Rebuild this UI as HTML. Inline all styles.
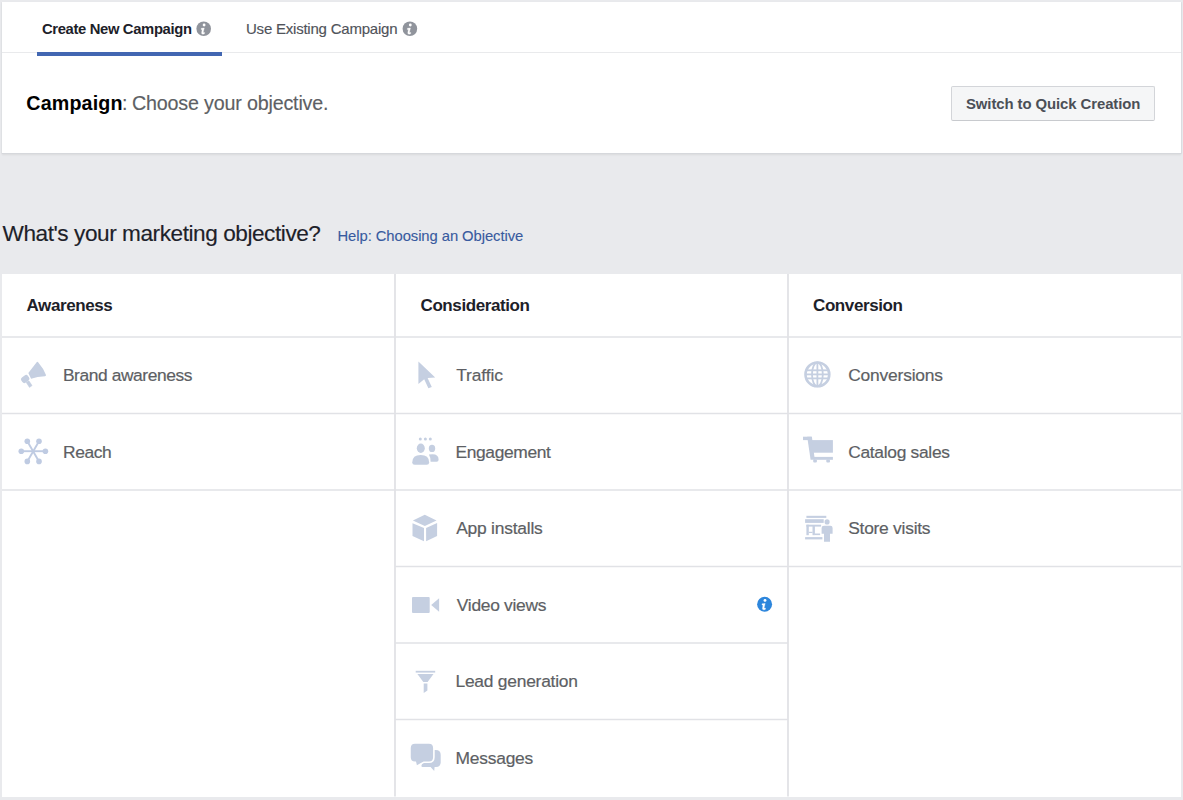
<!DOCTYPE html>
<html><head><meta charset="utf-8">
<style>
html,body{margin:0;padding:0;}
body{width:1183px;height:800px;background:#e9eaed;position:relative;overflow:hidden;font-family:"Liberation Sans",sans-serif;}
.a{position:absolute;white-space:nowrap;line-height:1;}
.card{position:absolute;left:2px;top:2px;width:1179px;height:151px;background:#fff;border-bottom:1px solid #d6d8dc;box-shadow:0 1px 2px rgba(0,0,0,0.07), 1px 0 0 #e0e1e5, -0.5px 0 0 #e0e1e5;}
.hl{position:absolute;height:1px;background:#dddfe2;}
.vl{position:absolute;width:2px;background:#e3e4e8;}
.item{font-size:17.4px;color:#5d5f64;-webkit-text-stroke:0.2px #5d5f64;}
.hd{font-size:17px;font-weight:700;letter-spacing:-0.4px;color:#1d2129;}
svg.ic{position:absolute;overflow:visible;}
.icf{fill:#c5cfe1;}
</style></head>
<body>
<div class="card"></div>
<!-- tabs -->
<div class="a" style="left:42px;top:22.1px;font-size:14.8px;font-weight:700;letter-spacing:-0.35px;color:#1d2129;">Create New Campaign</div>
<div class="hl" style="left:2px;top:52px;width:1179px;background:#e9eaec;"></div>
<div class="a" style="left:37px;top:52px;width:185px;height:4px;background:#4267b2;"></div>
<svg class="ic" style="left:0;top:0" width="1183" height="60" viewBox="0 0 1183 60"><g transform="translate(203.7 28.75) scale(1.0000)"><circle r="7.3" fill="#90949c"/><circle cx="0.4" cy="-3.75" r="1.4" fill="#fff"/><path d="M-2.45 -0.4 L0.55 -0.75 L-0.55 3.7 L0.95 3.85 L0.7 5.0 Q-0.3 5.5 -1.2 5.35 Q-2.2 5.1 -2.1 4.3 L-1.55 0.75 L-2.55 0.75 Z" fill="#fff" stroke="#fff" stroke-width="0.35" stroke-linejoin="round"/></g><g transform="translate(409.9 28.75) scale(1.0000)"><circle r="7.3" fill="#90949c"/><circle cx="0.4" cy="-3.75" r="1.4" fill="#fff"/><path d="M-2.45 -0.4 L0.55 -0.75 L-0.55 3.7 L0.95 3.85 L0.7 5.0 Q-0.3 5.5 -1.2 5.35 Q-2.2 5.1 -2.1 4.3 L-1.55 0.75 L-2.55 0.75 Z" fill="#fff" stroke="#fff" stroke-width="0.35" stroke-linejoin="round"/></g></svg>
<div class="a" style="left:246px;top:21.2px;font-size:15px;letter-spacing:-0.22px;color:#50535a;-webkit-text-stroke:0.15px #50535a;">Use Existing Campaign</div>


<div class="a" style="left:26.3px;top:94.2px;font-size:19.7px;font-weight:700;letter-spacing:0.14px;color:#000;">Campaign</div><div class="a" style="left:121.9px;top:94.2px;font-size:19.7px;color:#5d5f64;-webkit-text-stroke:0.15px #5d5f64;">:</div><div class="a" style="left:132px;top:94.2px;font-size:19.7px;letter-spacing:-0.18px;color:#5d5f64;-webkit-text-stroke:0.15px #5d5f64;">Choose your objective.</div>

<div class="a" style="left:951px;top:86px;width:202px;height:33px;border:1px solid #d3d5d9;border-bottom-color:#c8cace;border-radius:2px;background:#f5f6f7;"></div>
<div class="a" style="left:966px;top:96.9px;font-size:14.9px;font-weight:700;letter-spacing:-0.08px;color:#4b4f56;">Switch to Quick Creation</div>

<div class="a" style="left:2.5px;top:222.6px;font-size:22.6px;letter-spacing:-0.44px;color:#1d2129;-webkit-text-stroke:0.15px #1d2129;">What's your marketing objective?</div>
<div class="a" style="left:337.5px;top:229px;font-size:14.8px;letter-spacing:-0.07px;color:#385a9f;-webkit-text-stroke:0.12px #385a9f;">Help: Choosing an Objective</div>

<!-- table -->
<div class="a" style="left:2px;top:274px;width:1179px;height:522.5px;background:#fff;"></div>
<svg class="ic" style="left:0;top:0" width="1183" height="800" viewBox="0 0 1183 800">
<g stroke="#e1e2e6" stroke-width="1.6" fill="none">
<line x1="2" y1="337" x2="1181" y2="337"/>
<line x1="2" y1="413.5" x2="1181" y2="413.5"/>
<line x1="2" y1="490" x2="1181" y2="490"/>
<line x1="395" y1="566.5" x2="1181" y2="566.5"/>
<line x1="395" y1="643" x2="788" y2="643"/>
<line x1="395" y1="719.5" x2="788" y2="719.5"/>
</g>
<g stroke="#e1e2e6" stroke-width="1.8" fill="none">
<line x1="395" y1="274" x2="395" y2="796.5"/>
<line x1="788" y1="274" x2="788" y2="796.5"/>
</g>
</svg>
<div class="a hd" style="left:26.5px;top:297.2px;">Awareness</div>
<div class="a hd" style="left:420.5px;top:297.2px;">Consideration</div>
<div class="a hd" style="left:813px;top:297.2px;">Conversion</div>

<div class="a item" style="left:62.9px;top:367.17px;letter-spacing:-0.407px;">Brand awareness</div>
<div class="a item" style="left:63.1px;top:443.67px;letter-spacing:-0.45px;">Reach</div>
<div class="a item" style="left:456.2px;top:367.17px;letter-spacing:-0.117px;">Traffic</div>
<div class="a item" style="left:455.5px;top:443.67px;letter-spacing:-0.367px;">Engagement</div>
<div class="a item" style="left:456.2px;top:520.17px;letter-spacing:-0.218px;">App installs</div>
<div class="a item" style="left:456.8px;top:596.67px;letter-spacing:-0.28px;">Video views</div>
<div class="a item" style="left:455.5px;top:673.17px;letter-spacing:-0.236px;">Lead generation</div>
<div class="a item" style="left:455.5px;top:749.67px;letter-spacing:-0.214px;">Messages</div>
<div class="a item" style="left:848.2px;top:367.17px;letter-spacing:-0.18px;">Conversions</div>
<div class="a item" style="left:848.2px;top:443.67px;letter-spacing:-0.3px;">Catalog sales</div>
<div class="a item" style="left:848.2px;top:520.17px;letter-spacing:-0.245px;">Store visits</div>

<!-- ICONS -->
<svg class="ic" style="left:0;top:0" width="1183" height="800" viewBox="0 0 1183 800">
<g class="icf">
<!-- megaphone -->
<path d="M28.34 373.1 L36.85 362.04 Q37.49 361.4 38.13 362.26 Q43.66 368.64 46.0 375.02 Q46.21 376.09 44.94 376.3 Q37.28 376.72 31.1 378.85 Z"/>
<rect x="-4.1" y="-3.2" width="8.2" height="6.4" rx="2.4" transform="translate(25.2 379.0) rotate(-37)"/>
<path d="M26.1 382.3 L28.9 380.8 L32.1 385.6 L29.5 387.4 Z" stroke="#c5cfe1" stroke-width="0.5" stroke-linejoin="round"/>
<!-- cursor -->
<path d="M418.4 361.4 L435.2 377.6 L427.6 378 L431.8 386.9 L428.4 388.2 L424.2 379.3 L418.4 384 Z"/>
<!-- engagement -->
<circle cx="420.3" cy="439.0" r="1.5"/><circle cx="425.4" cy="439.0" r="1.5"/><circle cx="430.3" cy="439.0" r="1.5"/>
<ellipse cx="420.8" cy="448.2" rx="4.0" ry="4.7"/>
<path d="M412.3 462.3 Q412.3 455 420.7 455 Q429.1 455 429.1 462.3 Q429.1 464.8 426.6 464.8 L414.8 464.8 Q412.3 464.8 412.3 462.3 Z"/>
<ellipse cx="432" cy="448.4" rx="3.2" ry="3.6"/>
<path d="M428.9 454.6 Q430.5 454.3 432.6 454.3 Q438.6 454.3 438.6 459.8 Q438.6 461.8 436.6 461.8 L430.6 461.8 Q430.4 457 428.9 454.6 Z"/>
<!-- cube -->
<path d="M424.8 514.8 L436.5 520.6 L424.8 525.9 L412.9 520.4 Z"/>
<path d="M412.5 523.3 L424 528 L424 541.2 L412.5 536.1 Z"/>
<path d="M426.1 528 L437.1 523.1 L437.1 536.1 L426.1 541.2 Z"/>
<!-- video -->
<rect x="412" y="596.9" width="17.7" height="16" rx="1"/>
<path d="M431.2 605 L439.1 598.2 L439.1 611.8 Z"/>
<!-- funnel -->
<rect x="415.7" y="670.8" width="19.5" height="1.8"/>
<path d="M417.4 674 L433.5 674 L427.6 681.9 L423.3 681.9 Z"/>
<path d="M423.7 683.6 L427.4 683.6 L427.4 690.4 L423.7 692.9 Z"/>
<!-- messages -->
<path d="M425.8 750 L435.7 750 Q440.7 750 440.7 755 L440.7 762.3 Q440.7 767.1 436.0 767.1 L434.6 767.1 L434.2 770.9 L430.6 767.1 L422.5 767.1 Q421.2 767.1 421.5 765.5 Z"/>
<path d="M415 743.85 L428.9 743.85 Q433.1 743.85 433.1 748.1 L433.1 757.2 Q433.1 761.4 428.9 761.4 L423.6 761.4 L416.9 765.2 L416 761.4 L415 761.4 Q410.75 761.4 410.75 757.2 L410.75 748.1 Q410.75 743.85 415 743.85 Z" stroke="#fff" stroke-width="3.2"/>
<path d="M415 743.85 L428.9 743.85 Q433.1 743.85 433.1 748.1 L433.1 757.2 Q433.1 761.4 428.9 761.4 L423.6 761.4 L416.9 765.2 L416 761.4 L415 761.4 Q410.75 761.4 410.75 757.2 L410.75 748.1 Q410.75 743.85 415 743.85 Z"/>
<!-- cart -->
<rect x="803" y="436.7" width="8.6" height="3.4"/>
<rect x="811.4" y="440.1" width="21.5" height="12.6"/>
<path d="M807.2 436.7 L811.9 436.7 L814.8 459.8 L810.6 459.8 Z"/>
<rect x="813.7" y="456.9" width="19.2" height="2.9"/>
<rect x="813.2" y="459.5" width="3.7" height="2.9" rx="1"/>
<rect x="826.3" y="459.5" width="3.7" height="2.9" rx="1"/>
<!-- store -->
<rect x="806.4" y="515.8" width="19.9" height="2.1"/>
<rect x="805.1" y="519.2" width="18.6" height="3.7"/>
<rect x="806.4" y="524.7" width="2.4" height="10.5"/>
<rect x="806.4" y="524.7" width="14.7" height="1.9"/>
<rect x="812.5" y="526" width="2.4" height="9.2"/>
<rect x="808.8" y="531.8" width="3.7" height="1.2"/>
<rect x="814.9" y="533.5" width="5.2" height="1.6"/>
<rect x="805.1" y="537.1" width="17.3" height="2.3"/>
<circle cx="827.1" cy="521.9" r="2.55"/>
<path d="M824.0 525.8 L830.4 525.8 Q832.6 525.8 832.6 528.0 L832.6 533.7 L830 533.7 L830 541.8 L824 541.8 L824 533.7 L821.6 533.7 L821.6 528.0 Q821.6 525.8 824.0 525.8 Z"/>
</g>
<!-- reach -->
<g stroke="#bfcbe2" stroke-width="1.9" fill="#bfcbe2">
<line x1="21.3" y1="451.2" x2="45.4" y2="451.2"/>
<line x1="27.3" y1="441.2" x2="39.0" y2="461.4"/>
<line x1="39.0" y1="441.2" x2="27.3" y2="461.4"/>
</g>
<g fill="#bfcbe2"><circle cx="21.3" cy="451.2" r="2.8"/><circle cx="45.4" cy="451.2" r="2.8"/><circle cx="27.3" cy="441.2" r="2.8"/><circle cx="39.0" cy="441.2" r="2.8"/><circle cx="27.3" cy="461.4" r="2.8"/><circle cx="39.0" cy="461.4" r="2.8"/></g>
<!-- globe -->
<g fill="none" stroke="#c5cfe1">
<circle cx="817.4" cy="374.4" r="11.9" stroke-width="2.6"/>
<ellipse cx="817.4" cy="374.4" rx="5.4" ry="11.9" stroke-width="1.8"/>
<line x1="817.4" y1="362.5" x2="817.4" y2="386.3" stroke-width="1.8"/>
<line x1="806" y1="370.3" x2="828.8" y2="370.3" stroke-width="1.8"/>
<line x1="805" y1="374.4" x2="829.8" y2="374.4" stroke-width="1.8"/>
<line x1="806" y1="378.4" x2="828.8" y2="378.4" stroke-width="1.8"/>
</g>
<!-- blue info -->
<g transform="translate(764.6 604.25) scale(1.0274)"><circle r="7.3" fill="#2d86dc"/><circle cx="0.4" cy="-3.75" r="1.4" fill="#fff"/><path d="M-2.45 -0.4 L0.55 -0.75 L-0.55 3.7 L0.95 3.85 L0.7 5.0 Q-0.3 5.5 -1.2 5.35 Q-2.2 5.1 -2.1 4.3 L-1.55 0.75 L-2.55 0.75 Z" fill="#fff" stroke="#fff" stroke-width="0.35" stroke-linejoin="round"/></g>
</svg>

</body></html>
